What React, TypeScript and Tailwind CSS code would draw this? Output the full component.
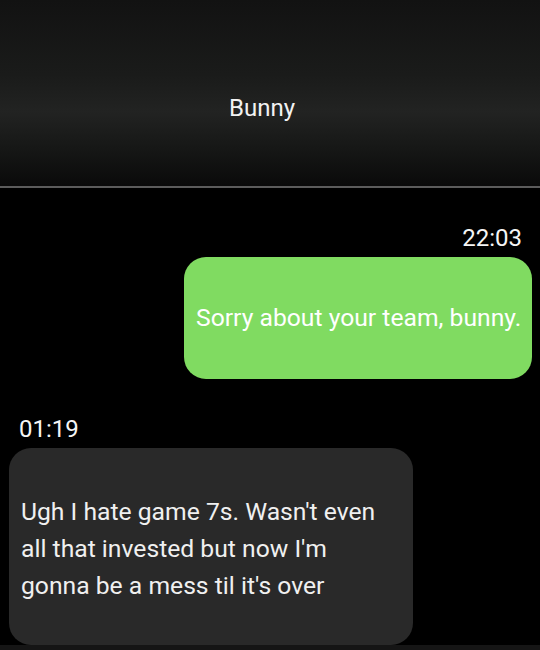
import React from "react";

const App = () => {
	return (
		<div className="w-[540px] h-[650px] overflow-hidden bg-black font-['Roboto','Liberation_Sans',sans-serif] text-white">
			<header className="h-[186px] flex justify-center pt-[92px] pr-[16px] bg-[linear-gradient(to_bottom,#121212_0%,#1a1b1a_40%,#222322_60%,#161716_80%,#0a0a0a_100%)]">
				<h1 className="text-[24px] leading-[32px] text-[#f2f2f2]">Bunny</h1>
			</header>
			<div className="h-[2px] bg-[#5c5c5c]" />

			<main className="flex flex-col">
				<div className="mt-[34px] flex flex-col items-end pr-[8px]">
					<span className="pr-[10px] text-[24px] leading-[32px] text-[#f5f5f5]">22:03</span>
					<div className="mt-[3px] w-[348px] h-[122px] flex items-center px-3 rounded-[22px] bg-[#80db61]">
						<p className="text-[24.7px] leading-[32px] text-white whitespace-nowrap">
							Sorry about your team, bunny.
						</p>
					</div>
				</div>

				<div className="mt-[34px] flex flex-col items-start pl-[9px]">
					<span className="pl-[10px] text-[24px] leading-[32px] text-[#f5f5f5]">01:19</span>
					<div className="mt-[3px] w-[404px] h-[197px] flex items-center px-3 pt-[3px] rounded-[22px] bg-[#292929]">
						<p className="text-[24.7px] leading-[37px] text-[#f0f0f0]">
							Ugh I hate game 7s. Wasn't even
							<br />
							all that invested but now I'm
							<br />
							gonna be a mess til it's over
						</p>
					</div>
				</div>
				<div className="h-[20px] bg-[#151515]" />
			</main>
		</div>
	);
};

export default App;
